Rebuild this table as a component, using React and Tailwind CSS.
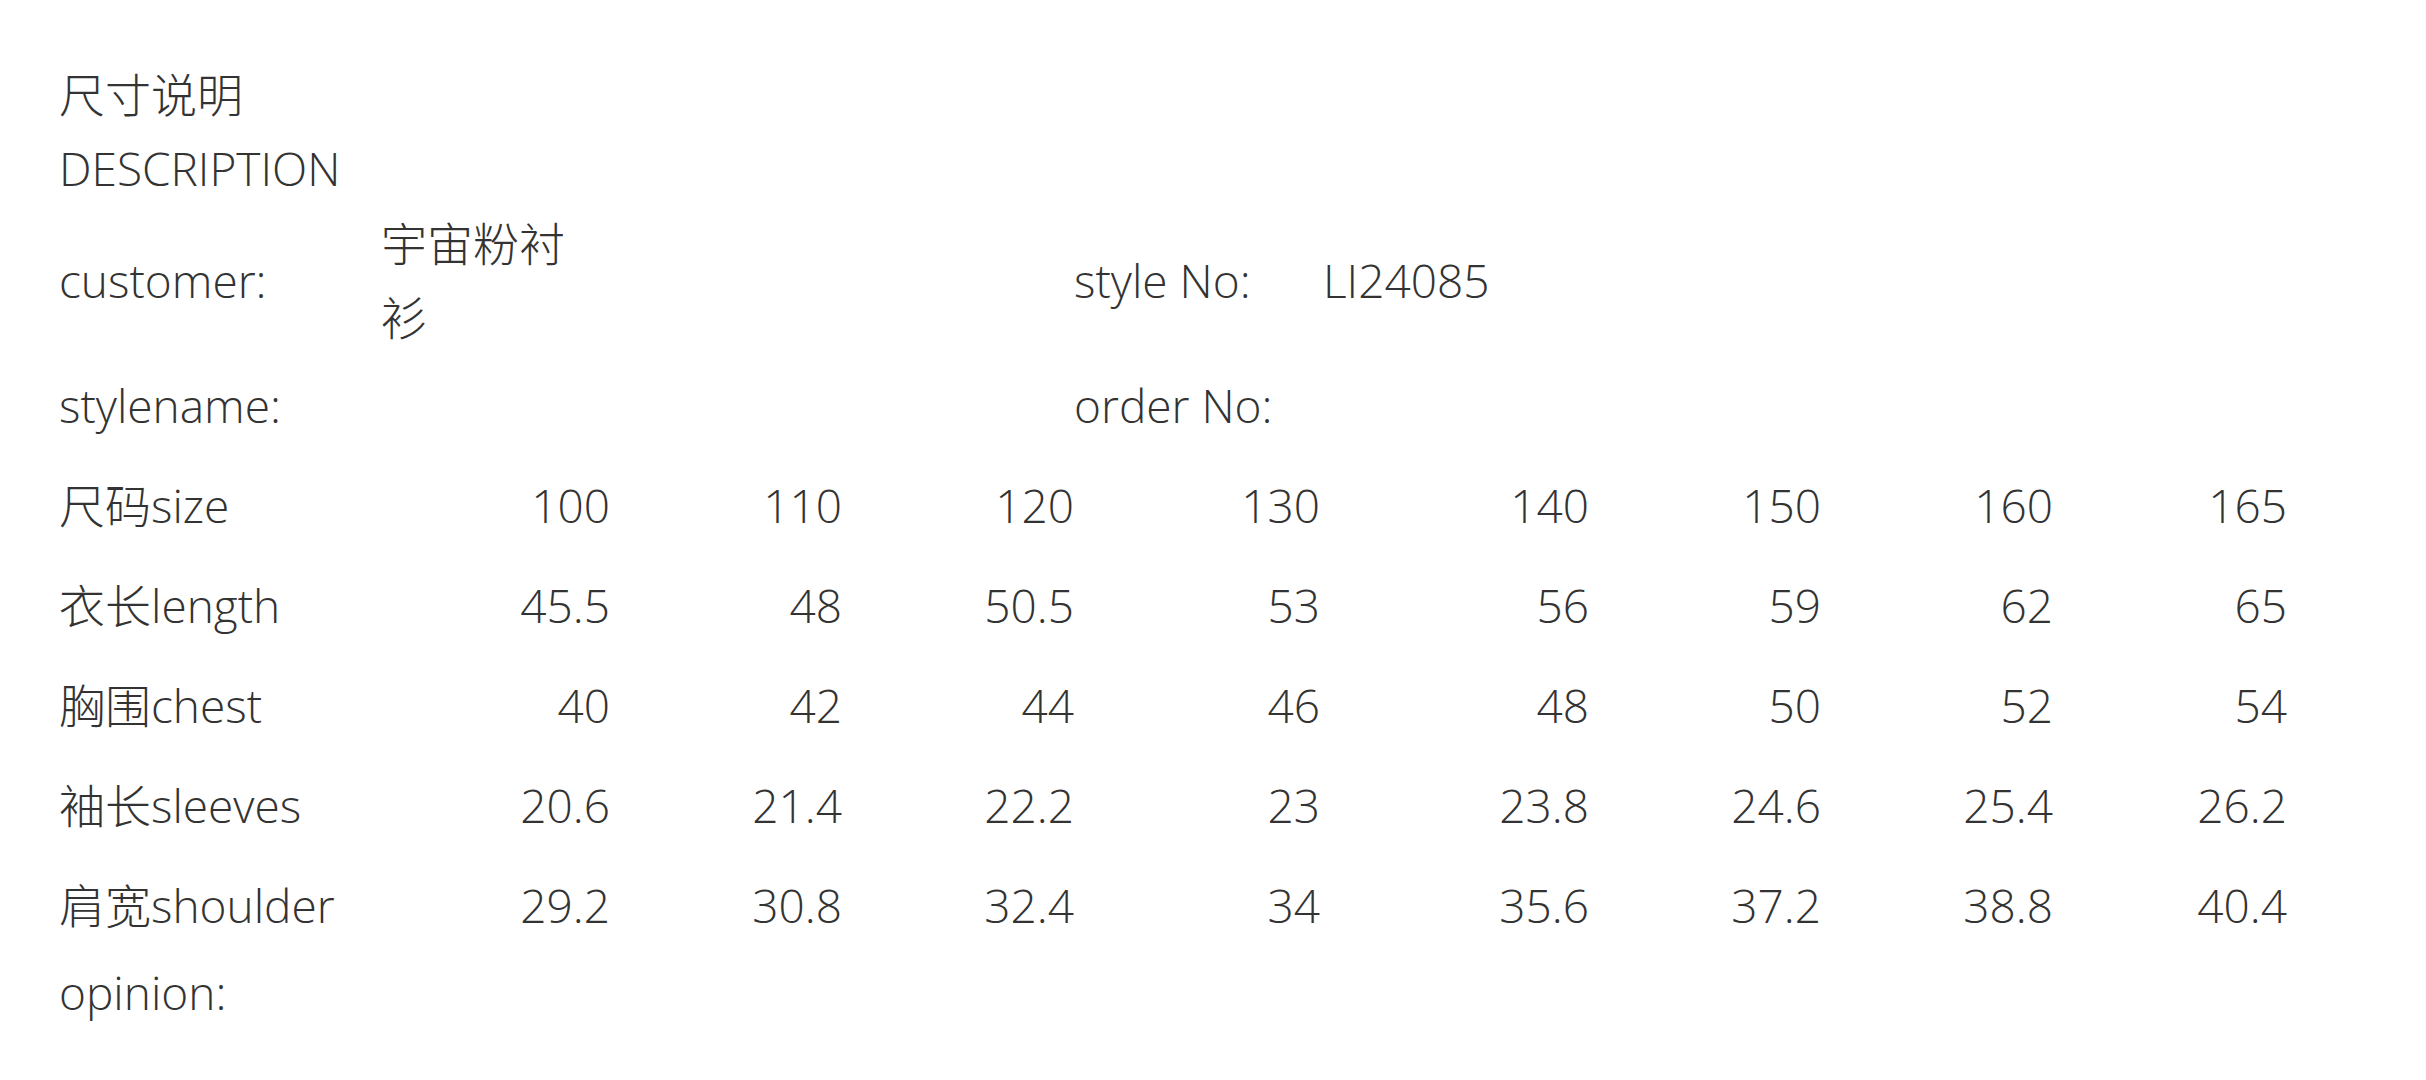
const sizes = ["100", "110", "120", "130", "140", "150", "160", "165"];

const measures = [
  { label: "衣长length", values: ["45.5", "48", "50.5", "53", "56", "59", "62", "65"] },
  { label: "胸围chest", values: ["40", "42", "44", "46", "48", "50", "52", "54"] },
  { label: "袖长sleeves", values: ["20.6", "21.4", "22.2", "23", "23.8", "24.6", "25.4", "26.2"] },
  { label: "肩宽shoulder", values: ["29.2", "30.8", "32.4", "34", "35.6", "37.2", "38.8", "40.4"] }
];

const colWidths = ["w-[322px]", "w-[229px]", "w-[232px]", "w-[232px]", "w-[246px]", "w-[269px]", "w-[232px]", "w-[232px]", "w-[234px]"];

const Row = ({ label, values, height = "h-[100px]" }) => (
  <tr className={height}>
    <td className="align-middle">{label}</td>
    {values.map((v, i) => (
      <td key={i} className="text-right align-middle">{v}</td>
    ))}
  </tr>
);

const App = () => (
  <div className="min-h-screen bg-white pl-[59px] pt-[57px] font-['Open_Sans','Noto_Sans_CJK_SC',sans-serif] text-[46px] font-light leading-[74px] text-[#333333]">
    <table className="table-fixed border-collapse">
      <colgroup>
        {colWidths.map((w, i) => (
          <col key={i} className={w} />
        ))}
      </colgroup>
      <tbody>
        {/* 标题 */}
        <tr className="h-[71px]">
          <td className="align-middle" colSpan={9}>尺寸说明</td>
        </tr>
        <tr className="h-[71px]">
          <td className="align-middle" colSpan={9}>DESCRIPTION</td>
        </tr>

        {/* 客户信息 */}
        <tr className="h-[150px]">
          <td className="align-middle">customer:</td>
          <td className="align-middle break-all">宇宙粉衬衫</td>
          <td />
          <td />
          <td className="align-middle">style No:</td>
          <td className="align-middle pl-[3px]">LI24085</td>
          <td />
          <td />
          <td />
        </tr>
        <tr className="h-[100px]">
          <td className="align-middle">stylename:</td>
          <td />
          <td />
          <td />
          <td className="align-middle">order No:</td>
          <td />
          <td />
          <td />
          <td />
        </tr>

        {/* 尺码表 */}
        <Row label="尺码size" values={sizes} />
        {measures.map((m) => (
          <Row key={m.label} label={m.label} values={m.values} />
        ))}

        <tr className="h-[74px]">
          <td className="align-middle">opinion:</td>
          <td colSpan={8} />
        </tr>
      </tbody>
    </table>
  </div>
);

export default App;
